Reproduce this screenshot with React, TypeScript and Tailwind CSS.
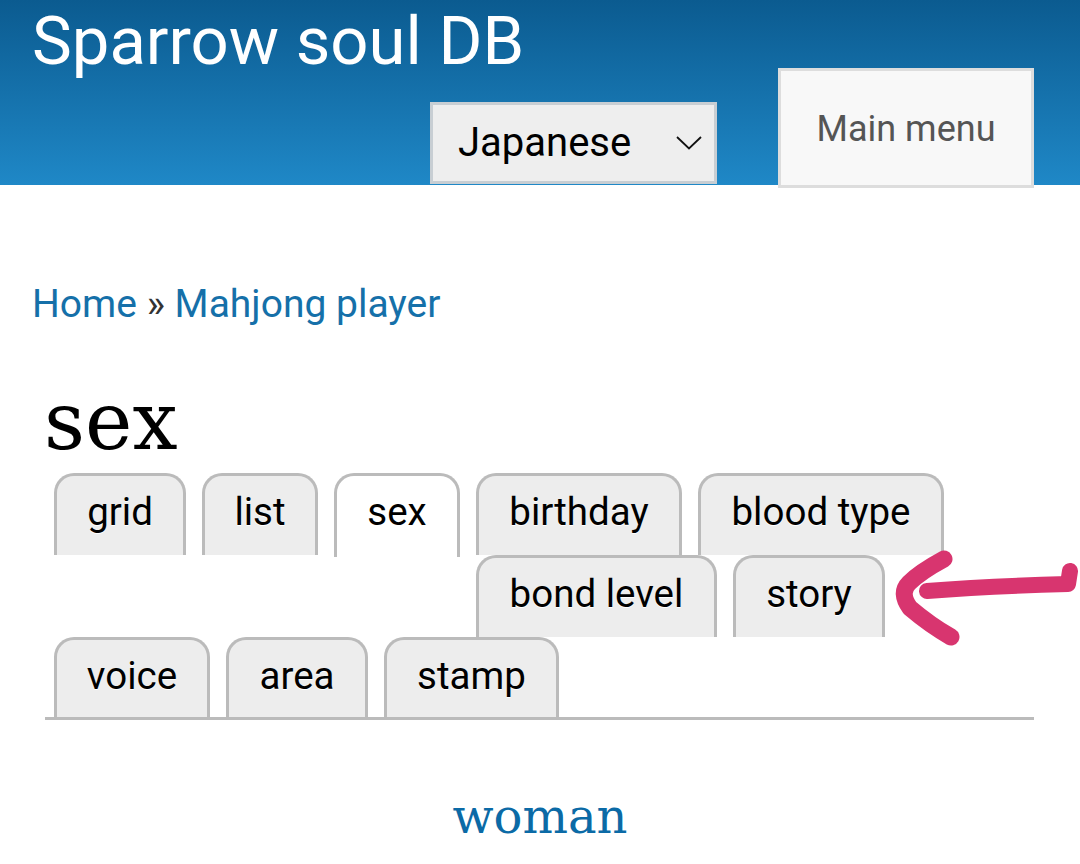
import React from 'react'

type Tab = { label: string; width: string; active?: boolean }

const rowOne: Tab[] = [
  { label: 'grid', width: 'w-[132px]' },
  { label: 'list', width: 'w-[116px]' },
  { label: 'sex', width: 'w-[126px]', active: true },
  { label: 'birthday', width: 'w-[206px]' },
  { label: 'blood type', width: 'w-[246px]' },
]

const rowTwo: Tab[] = [
  { label: 'bond level', width: 'w-[241px]' },
  { label: 'story', width: 'w-[152px]' },
]

const rowThree: Tab[] = [
  { label: 'voice', width: 'w-[156px]' },
  { label: 'area', width: 'w-[142px]' },
  { label: 'stamp', width: 'w-[175px]' },
]

function TabItem({ tab, tall }: { tab: Tab; tall?: boolean }) {
  return (
    <a
      href="#"
      className={`${tab.width} ${tab.active ? 'h-[84px] bg-white' : tall ? 'h-[82px] bg-[#ededed]' : 'h-[80px] bg-[#ededed]'} shrink-0 border-[3px] border-b-0 border-[#bbbbbb] rounded-t-[20px] pt-[14px] text-center text-[38.5px] leading-[44px] text-black [text-shadow:0_1px_0_#fff]`}
    >
      {tab.label}
    </a>
  )
}

export default function App() {
  return (
    <div className="relative min-h-screen bg-white font-['Roboto',sans-serif]">
      <header className="h-[185px] bg-gradient-to-b from-[#0b5b90] to-[#1f88c7]">
        <h2 className="pl-[32px] pt-[8px] text-[67px] leading-none text-white">Sparrow soul DB</h2>
        <div className="mt-[-7px] flex items-start justify-end gap-[61px] pr-[46px]">
          <div className="mt-[34px] flex h-[82px] w-[287px] items-center justify-between border-[3px] border-[#c8ced3] bg-[#eeeeee] pl-[25px] pr-[12px]">
            <span className="text-[40px] leading-none text-black">Japanese</span>
            <svg width="26" height="14" viewBox="0 0 26 14" fill="none">
              <path d="M1 1 L13 12.5 L25 1" stroke="#111" strokeWidth="1.8" />
            </svg>
          </div>
          <div className="relative z-10 flex h-[120px] w-[256px] items-center justify-center border-[3px] border-[#dddddd] bg-[#f8f8f8] pt-[2px]">
            <span className="text-[36px] leading-none text-[#555555]">Main menu</span>
          </div>
        </div>
      </header>

      <nav className="mt-[97px] px-[32px] text-[39px] leading-[44px]">
        <a href="#" className="text-[#1570a9]">Home</a>
        <span className="text-[#333333]"> » </span>
        <a href="#" className="text-[#1570a9]">Mahjong player</a>
      </nav>

      <h1 className="mt-[56px] pl-[44px] font-['DejaVu_Serif',serif] text-[80px] leading-none text-black">sex</h1>

      <div className="mt-[11px] ml-[45px] mr-[46px] border-b-[3px] border-[#bbbbbb] pl-[9px]">
        <div className="flex h-[82px] items-start gap-[16px]">
          {rowOne.map((t) => (
            <TabItem key={t.label} tab={t} tall />
          ))}
        </div>
        <div className="ml-[422px] flex h-[82px] items-start gap-[16px]">
          {rowTwo.map((t) => (
            <TabItem key={t.label} tab={t} tall />
          ))}
        </div>
        <div className="flex h-[80px] items-start gap-[16px]">
          {rowThree.map((t) => (
            <TabItem key={t.label} tab={t} />
          ))}
        </div>
      </div>

      <p className="mt-[72px] text-center font-['DejaVu_Serif',serif] text-[48px] leading-none text-[#0b6aa6]">
        <a href="#">woman</a>
      </p>

      {/* hand-drawn pointer over the story tab */}
      <svg
        className="absolute left-[890px] top-[550px]"
        width="190"
        height="100"
        viewBox="0 0 190 100"
        fill="none"
      >
        <path
          d="M54 9 Q30 22 19 33 Q9 43 20 58 Q40 75 61 87"
          stroke="#d8356f"
          strokeWidth="17"
          strokeLinecap="round"
          strokeLinejoin="round"
        />
        <path
          d="M37 41 Q100 36 178 34 L180 21"
          stroke="#d8356f"
          strokeWidth="16"
          strokeLinecap="round"
          strokeLinejoin="round"
        />
      </svg>
    </div>
  )
}
